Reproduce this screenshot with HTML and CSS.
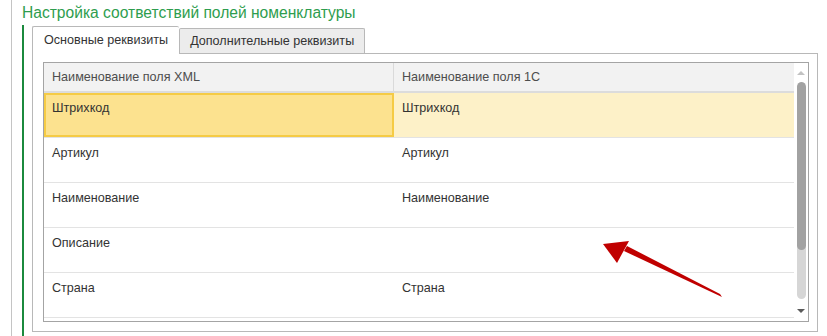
FILE: index.html
```html
<!DOCTYPE html>
<html lang="ru">
<head>
    <meta charset="UTF-8">
    <title>Настройка соответствий полей номенклатуры</title>
    <link rel="stylesheet" href="styles.css">
</head>
<body>

    <div class="frame">
        <h1 class="title">Настройка соответствий полей номенклатуры</h1>

        <div class="group">
            <!-- Tabs -->
            <div class="tabs">
                <div class="tab active">Основные реквизиты</div>
                <div class="tab">Дополнительные реквизиты</div>
            </div>

            <div class="panel">
                <div class="table">
                    <div class="rows">
                        <div class="row head">
                            <div class="cell">Наименование поля XML</div>
                            <div class="cell">Наименование поля 1С</div>
                        </div>
                        <div class="row selected">
                            <div class="cell focus">Штрихкод</div>
                            <div class="cell">Штрихкод</div>
                        </div>
                        <div class="row">
                            <div class="cell">Артикул</div>
                            <div class="cell">Артикул</div>
                        </div>
                        <div class="row">
                            <div class="cell">Наименование</div>
                            <div class="cell">Наименование</div>
                        </div>
                        <div class="row">
                            <div class="cell">Описание</div>
                            <div class="cell"></div>
                        </div>
                        <div class="row">
                            <div class="cell">Страна</div>
                            <div class="cell">Страна</div>
                        </div>
                        <div class="row">
                            <div class="cell"></div>
                            <div class="cell"></div>
                        </div>
                    </div>

                    <!-- Scrollbar -->
                    <div class="scrollbar">
                        <span class="arr up"></span>
                        <div class="track">
                            <div class="thumb"></div>
                        </div>
                        <span class="arr down"></span>
                    </div>
                </div>
            </div>
        </div>
    </div>

    <svg class="pointer" width="827" height="336" viewBox="0 0 827 336">
        <path d="M722 297 L624 251 L627 246 L720 294 Z" fill="#c00000"/>
        <path d="M603 244 L629 241 L617 263 Z" fill="#c00000"/>
    </svg>

</body>
</html>
```

FILE: styles.css
```css
body {
    margin: 0;
    font-family: "Liberation Sans", Arial, sans-serif;
    color: #333;
    background: #fff;
    width: 827px;
    height: 336px;
    overflow: hidden;
    position: relative;
}

/* outer form frame */
.frame {
    margin-left: 11px;
    border-left: 1px solid #c4c4c4;
    padding-left: 10px;
    height: 336px;
    box-sizing: border-box;
}

.title {
    margin: 0;
    padding-top: 4px;
    height: 21px;
    font-size: 15.6px;
    font-weight: normal;
    line-height: 17px;
    color: #2e9d4e;
    white-space: nowrap;
}

/* group with green line */
.group {
    border-left: 2px solid #1b8a3e;
    padding-left: 8px;
    height: 311px;
}

/* Tabs */
.tabs {
    display: flex;
    align-items: flex-end;
    height: 28px;
}

.tab {
    flex-shrink: 0;
    white-space: nowrap;
    font-size: 12.6px;
    line-height: 24px;
    padding: 0 10px;
    border: 1px solid #b8b8b8;
    border-bottom: none;
    background: #ececec;
    color: #333;
    height: 24px;
    border-radius: 2px 2px 0 0;
}

.tab.active {
    background: #fff;
    height: 27px;
    line-height: 27px;
    padding: 0 11px;
    position: relative;
    top: 1px;
    border-right: none;
}

.panel {
    border: 1px solid #b8b8b8;
    margin-right: 9px;
    padding: 8px 8px 9px 10px;
    height: 260px;
}

/* Table */
.table {
    border: 1px solid #a4a4a4;
    height: 258px;
    display: flex;
    overflow: hidden;
}

.rows {
    flex: 1;
}

.row {
    display: grid;
    grid-template-columns: 350px 1fr;
    height: 44px;
    border-bottom: 1px solid #e3e3e3;
    font-size: 12.6px;
}

.row .cell {
    padding: 8px 8px 0;
    line-height: 15px;
    white-space: nowrap;
}

.row.head {
    height: 28px;
    background: #f2f2f2;
    border-bottom: 2px solid #dcdcdc;
    color: #4d4d4d;
}

.row.head .cell {
    padding-top: 7px;
}

.row.head .cell:first-child {
    border-right: 1px solid #dadada;
}

.row.selected {
    background: #fdf1c8;
}

.row.selected .cell.focus {
    background: #fce28f;
    border: 2px solid #f5cb45;
    padding: 6px 6px 0;
}

/* Scrollbar */
.scrollbar {
    width: 14px;
    display: flex;
    flex-direction: column;
    align-items: center;
    padding: 8px 0 8px;
}

.arr {
    width: 0;
    height: 0;
    border-left: 4px solid transparent;
    border-right: 4px solid transparent;
}

.arr.up {
    border-bottom: 4px solid #c2c2c2;
}

.arr.down {
    border-top: 4px solid #5a5a5a;
}

.track {
    flex: 1;
    width: 9px;
    margin: 7px 0 10px;
    background: #d6d6d6;
    border-radius: 5px;
    overflow: hidden;
}

.thumb {
    height: 168px;
    background: #a2a2a2;
    border-radius: 5px;
}

/* red annotation arrow */
.pointer {
    position: absolute;
    left: 0;
    top: 0;
    pointer-events: none;
}
```
